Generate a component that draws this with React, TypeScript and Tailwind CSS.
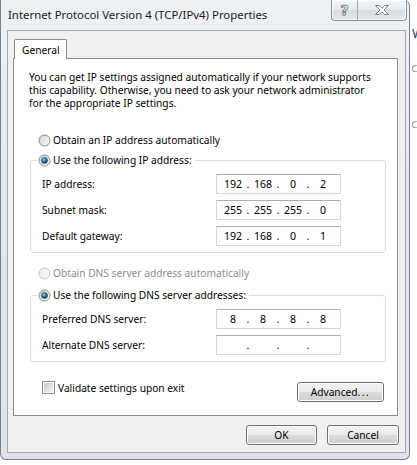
import React from "react";

function Radio({ checked = false, disabled = false }: { checked?: boolean; disabled?: boolean }) {
  const id = React.useId().replace(/:/g, "");
  return (
    <svg width="13" height="13" viewBox="0 0 13 13" className="shrink-0">
      <defs>
        <linearGradient id={`rf${id}`} x1="0" y1="0" x2="1" y2="1">
          <stop offset="0" stopColor={disabled ? "#ececec" : "#d2d2d2"} />
          <stop offset="1" stopColor={disabled ? "#fafafa" : "#fbfbfb"} />
        </linearGradient>
        <radialGradient id={`rd${id}`} cx="0.4" cy="0.35" r="0.7">
          <stop offset="0" stopColor="#8fe0f5" />
          <stop offset="0.45" stopColor="#2a7fa6" />
          <stop offset="1" stopColor="#0f3146" />
        </radialGradient>
      </defs>
      <circle cx="6.5" cy="6.5" r="5.5" fill={`url(#rf${id})`} stroke={disabled ? "#c4c4c4" : "#8a8a8a"} strokeWidth="1" />
      {checked && <circle cx="6.5" cy="6.5" r="3" fill={`url(#rd${id})`} stroke="#1b3f55" strokeWidth="0.6" />}
    </svg>
  );
}

function Checkbox() {
  return (
    <svg width="13" height="13" viewBox="0 0 13 13" className="shrink-0">
      <defs>
        <linearGradient id="cbg" x1="0" y1="0" x2="1" y2="1">
          <stop offset="0" stopColor="#c9c9c9" />
          <stop offset="1" stopColor="#f6f6f6" />
        </linearGradient>
      </defs>
      <rect x="0.5" y="0.5" width="12" height="12" fill="#ffffff" stroke="#8e8f8f" />
      <rect x="2" y="2" width="9" height="9" fill="url(#cbg)" />
    </svg>
  );
}

function IpField({ parts }: { parts: string[] }) {
  return (
    <div className="flex h-[20px] w-[125px] items-center border border-[#d2d6dc] border-t-[#abadb3] bg-white pl-[4px] text-[10.6px] text-black">
      {parts.map((p, i) => (
        <React.Fragment key={i}>
          <span className="w-[24px] text-center leading-[18px]">{p}</span>
          {i < 3 && <span className="w-[6px] text-center leading-[18px]">.</span>}
        </React.Fragment>
      ))}
    </div>
  );
}

function Row({ label, parts }: { label: string; parts: string[] }) {
  return (
    <div className="flex items-center pl-[11px]">
      <span className="w-[174px] leading-[16px]">{label}</span>
      <IpField parts={parts} />
    </div>
  );
}

function Btn({ children, w }: { children: React.ReactNode; w: string }) {
  return (
    <div
      className={`${w} flex h-[20px] items-center justify-center rounded-[3px] border border-[#707070] bg-[linear-gradient(#f2f2f2_0%,#ebebeb_50%,#dddddd_50%,#cfcfcf_100%)] shadow-[inset_0_0_0_1px_#fcfcfc] leading-[16px] text-black`}
    >
      {children}
    </div>
  );
}

export default function App() {
  return (
    <div className="flex h-[465px] w-[417px] overflow-hidden bg-white font-['Noto_Sans',sans-serif] text-[10.2px] text-black">
      {/* window */}
      <div className="flex h-[460px] w-[410px] shrink-0 flex-col rounded-tr-[6px] rounded-b-[6px] border-r border-b border-l border-[#7d8085] bg-[linear-gradient(180deg,#eef1f5_0%,#e4e8ed_40%,#dfe3e8_100%)]">
        {/* title bar */}
        <div className="flex h-[30px] shrink-0 items-start">
          <div className="flex-1 pl-[7px] pt-[7px] text-[11.4px] leading-[16px] text-[#1a1a1a]">
            Internet Protocol Version 4 (TCP/IPv4) Properties
          </div>
          <div className="mr-[2px] flex h-[21px] overflow-hidden rounded-b-[4px] border border-t-0 border-[#8d9096] bg-[linear-gradient(#f4f6f8_0%,#e6e9ed_50%,#d9dde2_51%,#e4e7eb_100%)] shadow-[inset_0_0_0_1px_rgba(255,255,255,0.7)]">
            <div className="flex w-[26px] items-center justify-center border-r border-[#a7abb1]">
              <span className="font-['DejaVu_Sans',sans-serif] text-[14px] font-bold leading-none text-white [-webkit-text-stroke:1px_#7b7f86]">?</span>
            </div>
            <div className="flex w-[48px] items-center justify-center">
              <svg width="16" height="12" viewBox="0 0 16 12">
                <path
                  d="M1.5 1.5 H5.2 L8 4.2 L10.8 1.5 H14.5 L10 6 L14.5 10.5 H10.8 L8 7.8 L5.2 10.5 H1.5 L6 6 Z"
                  fill="#ffffff"
                  stroke="#7b7f86"
                  strokeWidth="1"
                  strokeLinejoin="round"
                />
              </svg>
            </div>
          </div>
        </div>

        {/* client area */}
        <div className="ml-[6px] mr-[3px] flex h-[423px] flex-col border border-[#a3a7ad] bg-[#f0f0f0]">
          {/* tab strip */}
          <div className="flex pl-[6px] pt-[8px]">
            <div className="relative z-10 -mb-[1px] flex h-[20px] w-[53px] items-center rounded-t-[2px] border border-b-0 border-[#898c95] bg-white pl-[7px] leading-[16px]">
              General
            </div>
          </div>
          {/* panel */}
          <div className="ml-[5px] flex h-[358px] w-[385px] flex-col border border-[#898c95] bg-white">
            <p className="whitespace-nowrap pl-[15px] pt-[12px] text-[10.2px] leading-[13px]">
              You can get IP settings assigned automatically if your network supports
              <br />
              this capability. Otherwise, you need to ask your network administrator
              <br />
              for the appropriate IP settings.
            </p>

            <div className="ml-[24px] mt-[22px] flex h-[16px] items-center gap-[2px]">
              <Radio />
              <span className="leading-[16px]">Obtain an IP address automatically</span>
            </div>

            <fieldset className="ml-[16px] mt-[4px] w-[356px] rounded-[3px] border border-[#d5dfe5] pb-[6px]">
              <legend className="ml-[6px] px-[1px]">
                <div className="flex h-[16px] items-center gap-[2px] pr-[2px]">
                  <Radio checked />
                  <span className="leading-[16px]">Use the following IP address:</span>
                </div>
              </legend>
              <div className="flex flex-col gap-[6px] pt-[6px]">
                <Row label="IP address:" parts={["192", "168", "0", "2"]} />
                <Row label="Subnet mask:" parts={["255", "255", "255", "0"]} />
                <Row label="Default gateway:" parts={["192", "168", "0", "1"]} />
              </div>
            </fieldset>

            <div className="ml-[24px] mt-[12px] flex h-[16px] items-center gap-[2px] text-[#8d8d8d]">
              <Radio disabled />
              <span className="leading-[16px]">Obtain DNS server address automatically</span>
            </div>

            <fieldset className="ml-[16px] mt-[6px] w-[356px] rounded-[3px] border border-[#d5dfe5] pb-[6px]">
              <legend className="ml-[6px] px-[1px]">
                <div className="flex h-[16px] items-center gap-[2px] pr-[2px]">
                  <Radio checked />
                  <span className="leading-[16px]">Use the following DNS server addresses:</span>
                </div>
              </legend>
              <div className="flex flex-col gap-[6px] pt-[6px]">
                <Row label="Preferred DNS server:" parts={["8", "8", "8", "8"]} />
                <Row label="Alternate DNS server:" parts={["", "", "", ""]} />
              </div>
            </fieldset>

            <div className="mt-[19px] flex items-start justify-between pl-[28px] pr-[13px]">
              <div className="flex h-[13px] items-center gap-[3px]">
                <Checkbox />
                <span className="leading-[16px]">Validate settings upon exit</span>
              </div>
              <div className="mt-[1px]">
                <Btn w="w-[87px]">
                  Advanced<span className="tracking-[1.5px]">...</span>
                </Btn>
              </div>
            </div>
          </div>

          {/* bottom buttons */}
          <div className="mt-[9px] flex justify-end gap-[10px] pr-[6px]">
            <Btn w="w-[71px]">OK</Btn>
            <Btn w="w-[72px]">Cancel</Btn>
          </div>
        </div>
      </div>

      {/* background behind the dialog */}
      <div className="flex flex-1 flex-col overflow-hidden pt-[26px] text-[13px] leading-[14px]">
        <span className="pl-[2px] text-[#1f3a6b]">W</span>
        <span className="mt-[20px] pl-[1px] text-[#9a9a9a]">c</span>
        <span className="mt-[42px] pl-[1px] text-[#9a9a9a]">c</span>
      </div>
    </div>
  );
}
